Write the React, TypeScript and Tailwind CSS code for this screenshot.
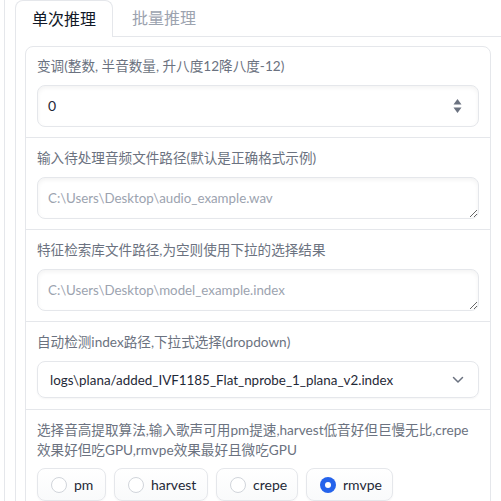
import React from 'react';

const font = { fontFamily: 'Lato, "Noto Sans CJK SC", sans-serif' };

const Label: React.FC<{ children: React.ReactNode }> = ({ children }) => (
  <div className="text-[13.6px] leading-[20px] text-[#6b7280]">{children}</div>
);

const Radio: React.FC<{ label: string; checked?: boolean; w: string }> = ({ label, checked, w }) => (
  <div className={`${w} flex items-center gap-[7px] h-[33px] pl-[13px] rounded-lg border border-[#e5e7eb] bg-gradient-to-b from-white to-[#f9fafb] shadow-[0_1px_2px_rgba(0,0,0,0.04)]`}>
    {checked ? (
      <span className="w-4 h-4 shrink-0 rounded-full bg-[#2563eb] flex items-center justify-center">
        <span className="w-[6px] h-[6px] rounded-full bg-white" />
      </span>
    ) : (
      <span className="w-4 h-4 shrink-0 rounded-full border border-[#d1d5db] bg-white" />
    )}
    <span className="text-[14px] leading-[20px] text-[#1f2937]">{label}</span>
  </div>
);

export default function App() {
  return (
    <div className="w-[501px] h-[501px] overflow-hidden bg-white pl-[4px]" style={font}>
      <div className="h-full border-l border-[#e5e7eb] pl-[10px]">
        {/* tab nav */}
        <div className="flex h-[37px] border-b border-[#e5e7eb]">
          <div className="-mb-px h-[37px] px-[16px] flex items-center rounded-t-lg border border-b-0 border-[#e5e7eb] bg-white text-[16px] leading-[20px] text-[#111827]">
            单次推理
          </div>
          <div className="h-[36px] px-[19px] flex items-center text-[16px] leading-[20px] text-[#9ca3af]">批量推理</div>
        </div>

        {/* panel */}
        <div className="border-l border-[#e5e7eb] pl-[9px] pt-[9px] pr-[10px]">
          <div className="rounded-lg border border-[#e5e7eb] bg-white">
            <div className="px-[11px] pt-[9px] pb-[10px] border-b border-[#e5e7eb]">
              <Label>变调(整数, 半音数量, 升八度12降八度-12)</Label>
              <div className="mt-[9px] h-[42px] rounded-lg border border-[#e5e7eb] shadow-[inset_0_2px_4px_rgba(0,0,0,0.05)] flex items-center pl-[10px] pr-[16px]">
                <span className="flex-1 text-[14px] leading-[20px] text-[#1f2937]">0</span>
                <svg width="9" height="18" viewBox="0 0 9 18">
                  <path d="M4.5 2 L8.5 7.5 L0.5 7.5 Z" fill="#6b7280" />
                  <path d="M4.5 16 L8.5 10.5 L0.5 10.5 Z" fill="#6b7280" />
                </svg>
              </div>
            </div>

            <div className="px-[11px] pt-[10px] pb-[10px] border-b border-[#e5e7eb]">
              <Label>输入待处理音频文件路径(默认是正确格式示例)</Label>
              <textarea
                readOnly
                placeholder="C:\Users\Desktop\audio_example.wav"
                className="mt-[9px] block w-full h-[42px] rounded-lg border border-[#e5e7eb] shadow-[inset_0_2px_4px_rgba(0,0,0,0.05)] px-[10px] py-[10px] text-[13.3px] leading-[20px] placeholder:text-[#9ca3af] outline-none resize-y"
              />
            </div>

            <div className="px-[11px] pt-[10px] pb-[10px] border-b border-[#e5e7eb]">
              <Label>特征检索库文件路径,为空则使用下拉的选择结果</Label>
              <textarea
                readOnly
                placeholder="C:\Users\Desktop\model_example.index"
                className="mt-[9px] block w-full h-[42px] rounded-lg border border-[#e5e7eb] shadow-[inset_0_2px_4px_rgba(0,0,0,0.05)] px-[10px] py-[10px] text-[13.3px] leading-[20px] placeholder:text-[#9ca3af] outline-none resize-y"
              />
            </div>

            <div className="px-[11px] pt-[10px] pb-[11px] border-b border-[#e5e7eb]">
              <Label>自动检测index路径,下拉式选择(dropdown)</Label>
              <div className="mt-[9px] h-[37px] rounded-lg border border-[#e5e7eb] shadow-[0_1px_2px_rgba(0,0,0,0.04)] flex items-center pl-[12px] pr-[14px]">
                <span className="flex-1 text-[13.4px] leading-[20px] text-[#1f2937]">
                  logs\plana/added_IVF1185_Flat_nprobe_1_plana_v2.index
                </span>
                <svg width="12" height="8" viewBox="0 0 12 8">
                  <path d="M1.5 1.5 L6 6 L10.5 1.5" fill="none" stroke="#6b7280" strokeWidth="1.5" strokeLinecap="round" strokeLinejoin="round" />
                </svg>
              </div>
            </div>

            <div className="px-[11px] pt-[10px] pb-[10px]">
              <Label>
                选择音高提取算法,输入歌声可用pm提速,harvest低音好但巨慢无比,crepe效果好但吃GPU,rmvpe效果最好且微吃GPU
              </Label>
              <div className="mt-[8px] flex gap-2">
                <Radio label="pm" w="w-[69px]" />
                <Radio label="harvest" w="w-[94px]" />
                <Radio label="crepe" w="w-[82px]" />
                <Radio label="rmvpe" w="w-[87px]" checked />
              </div>
            </div>
          </div>
        </div>
      </div>
    </div>
  );
}
